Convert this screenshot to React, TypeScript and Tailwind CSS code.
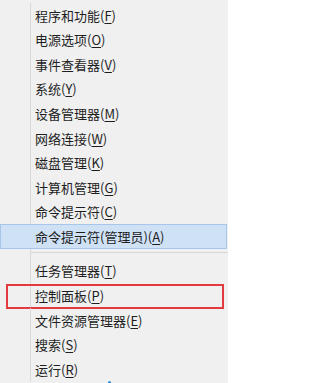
const topItems: [string, string][] = [
  ["程序和功能", "F"],
  ["电源选项", "O"],
  ["事件查看器", "V"],
  ["系统", "Y"],
  ["设备管理器", "M"],
  ["网络连接", "W"],
  ["磁盘管理", "K"],
  ["计算机管理", "G"],
  ["命令提示符", "C"],
];

const bottomItems: [string, string][] = [
  ["任务管理器", "T"],
  ["控制面板", "P"],
  ["文件资源管理器", "E"],
  ["搜索", "S"],
  ["运行", "R"],
];

function Label({ text, hotkey }: { text: string; hotkey: string }) {
  return (
    <span className="pl-[4px] whitespace-nowrap">
      {text}(<span className="underline underline-offset-2">{hotkey}</span>)
    </span>
  );
}

function Row({ text, hotkey, boxed }: { text: string; hotkey: string; boxed?: boolean }) {
  return (
    <div className="relative flex h-[24.6px] items-center">
      <div className="h-full w-[31px] shrink-0 border-r border-[#dadada]" />
      <Label text={text} hotkey={hotkey} />
      {boxed && (
        <div className="absolute left-[6px] top-[0px] h-[25px] w-[218px] border-2 border-[#e33a3f]" />
      )}
    </div>
  );
}

export default function App() {
  return (
    <div
      className="relative h-[383px] w-[228px] overflow-hidden bg-[#f0f0f0] pt-[3px] text-[13px] text-[#1e1e1e]"
      style={{ fontFamily: '"Noto Sans CJK SC", "Noto Sans", sans-serif' }}
    >
      {topItems.map(([t, k]) => (
        <Row key={t} text={t} hotkey={k} />
      ))}
      {/* highlighted row */}
      <div className="flex h-[24.6px] w-[227px] items-center border border-[#a8c6ea] bg-[#cfe1f5]">
        <div className="w-[30px] shrink-0" />
        <Label text="命令提示符(管理员)" hotkey="A" />
      </div>
      {/* separator */}
      <div className="flex h-[10px]">
        <div className="h-full w-[31px] shrink-0 border-r border-[#dadada]" />
        <div className="mt-[3px] h-px flex-1 bg-[#d6d6d6]" />
      </div>
      {bottomItems.map(([t, k]) => (
        <Row key={t} text={t} hotkey={k} boxed={k === "P"} />
      ))}
      <div className="absolute bottom-0 left-[108px] h-[2px] w-[3px] rounded-t-full bg-[#2a8ad8]" />
    </div>
  );
}
